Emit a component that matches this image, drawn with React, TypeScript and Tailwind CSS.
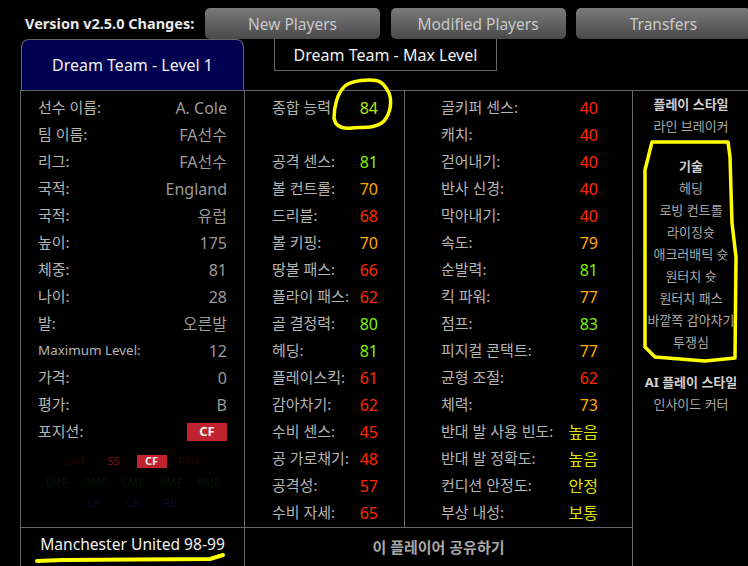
const font = { fontFamily: '"Noto Sans", "Noto Sans CJK KR", sans-serif' };

const info = [
  ['선수 이름:', 'A. Cole'],
  ['팀 이름:', 'FA선수'],
  ['리그:', 'FA선수'],
  ['국적:', 'England'],
  ['국적:', '유럽'],
  ['높이:', '175'],
  ['체중:', '81'],
  ['나이:', '28'],
  ['발:', '오른발'],
  ['Maximum Level:', '12'],
  ['가격:', '0'],
  ['평가:', 'B'],
];

const attack = [
  ['공격 센스:', 81],
  ['볼 컨트롤:', 70],
  ['드리블:', 68],
  ['볼 키핑:', 70],
  ['땅볼 패스:', 66],
  ['플라이 패스:', 62],
  ['골 결정력:', 80],
  ['헤딩:', 81],
  ['플레이스킥:', 61],
  ['감아차기:', 62],
  ['수비 센스:', 45],
  ['공 가로채기:', 48],
  ['공격성:', 57],
  ['수비 자세:', 65],
] as const;

const keeper = [
  ['골키퍼 센스:', 40],
  ['캐치:', 40],
  ['걷어내기:', 40],
  ['반사 신경:', 40],
  ['막아내기:', 40],
  ['속도:', 79],
  ['순발력:', 81],
  ['킥 파워:', 77],
  ['점프:', 83],
  ['피지컬 콘택트:', 77],
  ['균형 조절:', 62],
  ['체력:', 73],
] as const;

const extras = [
  ['반대 발 사용 빈도:', '높음'],
  ['반대 발 정확도:', '높음'],
  ['컨디션 안정도:', '안정'],
  ['부상 내성:', '보통'],
];

const skills = ['헤딩', '로빙 컨트롤', '라이징슛', '애크러배틱 슛', '원터치 슛', '원터치 패스', '바깥쪽 감아차기', '투쟁심'];

const statColor = (n: number) => {
  if (n >= 84) return 'text-[#b8e800]';
  if (n >= 80) return 'text-[#80f000]';
  if (n >= 70) return 'text-[#ffa800]';
  return 'text-[#ff2a00]';
};

const Row = ({ label, children, small }: { label: string; children: React.ReactNode; small?: boolean }) => (
  <div className="flex h-[27px] items-center justify-between whitespace-nowrap">
    <span className={small ? 'text-[13.4px] text-[#b4b4b4]' : 'text-[15px] text-[#b4b4b4]'}>{label}</span>
    {children}
  </div>
);

const Stat = ({ label, value }: { label: string; value: number }) => (
  <Row label={label}>
    <span className={`text-[16px] ${statColor(value)}`}>{value}</span>
  </Row>
);

const Chip = ({ label, className }: { label: string; className: string }) => (
  <span className={`flex h-[13px] w-[30px] items-center justify-center text-[11px] ${className}`}>{label}</span>
);

export default function App() {
  return (
    <div style={font} className="relative flex h-[566px] w-[748px] flex-col overflow-hidden bg-black">
      <div className="flex h-[39px] shrink-0 items-end pl-[25px]">
        <div className="flex h-[31px] w-[180px] shrink-0 items-center text-[14.5px] font-bold whitespace-nowrap text-[#e8e8e8]">Version v2.5.0 Changes:</div>
        <div className="flex shrink-0 gap-[10.5px]">
          {['New Players', 'Modified Players', 'Transfers'].map((b) => (
            <div
              key={b}
              className="flex h-[31px] w-[175px] shrink-0 items-center justify-center rounded-[5px] bg-gradient-to-b from-[#7a7a7a] to-[#4a4a4a] pt-[2px] text-[15.5px] text-[#c8c8c8]"
            >
              {b}
            </div>
          ))}
        </div>
      </div>

      <div className="flex h-[51px] shrink-0 items-start pl-[21px]">
        <div className="flex h-[52px] w-[223px] items-center justify-center rounded-t-[8px] border border-b-0 border-[#666] bg-[#000050] pb-[2px] text-[16px] text-[#f0f0f0]">
          Dream Team - Level 1
        </div>
        <div className="ml-[30px] flex h-[32px] w-[223px] items-center justify-center border border-t-0 border-[#666] text-[16px] text-[#f0f0f0]">
          Dream Team - Max Level
        </div>
      </div>

      <div className="ml-[20px] flex h-[476px] shrink-0 border-t border-l border-[#666]">
        <div className="flex w-[224px] shrink-0 flex-col border-r border-[#666]">
          <div className="flex-1 pt-[3px] pr-[17px] pl-[17px]">
            {info.map(([k, v]) => (
              <Row key={k + v} label={k} small={k === 'Maximum Level:'}>
                <span className="text-[16px] text-[#9a9a9a]">{v}</span>
              </Row>
            ))}
            <Row label="포지션:">
              <span className="flex h-[18px] w-[40px] items-center justify-center bg-[#c0232f] text-[13px] font-bold text-[#f0f0f0]">CF</span>
            </Row>
            <div className="mt-[10px] flex flex-col gap-[8px]">
              <div className="flex justify-center gap-[8px]">
                <Chip label="LWF" className="text-[#220303]" />
                <Chip label="SS" className="text-[#8a1015]" />
                <Chip label="CF" className="bg-[#c0232f] font-bold text-[#f0f0f0]" />
                <Chip label="RWF" className="text-[#220303]" />
              </div>
              <div className="flex justify-center gap-[8px]">
                {['LMF', 'DMF', 'CMF', 'AMF', 'RMF'].map((p) => (
                  <Chip key={p} label={p} className="text-[#081408]" />
                ))}
              </div>
              <div className="flex justify-center gap-[8px]">
                {['LB', 'CB', 'RB'].map((p) => (
                  <Chip key={p} label={p} className="text-[#060a20]" />
                ))}
              </div>
            </div>
          </div>
          <div className="flex h-[39px] shrink-0 items-center justify-center border-t border-[#666] pb-[5px] text-[15.6px] whitespace-nowrap text-[#f0f0f0]">
            Manchester United 98-99
          </div>
        </div>

        <div className="flex w-[387px] shrink-0 flex-col">
          <div className="flex flex-1">
            <div className="w-[160px] shrink-0 border-r border-[#666] pt-[3px] pr-[26px] pl-[27px]">
              <Stat label="종합 능력" value={84} />
              <div className="h-[27px]" />
              {attack.map(([k, v]) => (
                <Stat key={k} label={k} value={v} />
              ))}
            </div>
            <div className="flex-1 pt-[3px] pr-[34px] pl-[36px]">
              {keeper.map(([k, v]) => (
                <Stat key={k} label={k} value={v} />
              ))}
              {extras.map(([k, v]) => (
                <Row key={k} label={k}>
                  <span className="text-[16px] text-[#e0e000]">{v}</span>
                </Row>
              ))}
            </div>
          </div>
          <div className="flex h-[39px] shrink-0 items-center justify-center border-t border-[#666] text-[15px] font-bold text-[#a8a8a8]">
            이 플레이어 공유하기
          </div>
        </div>

        <div className="flex w-[117px] shrink-0 flex-col items-center border-l border-[#666] pt-[3px] text-[13px] whitespace-nowrap text-[#a8a8a8]">
          <div className="flex h-[22px] items-center font-bold text-[#d0d0d0]">플레이 스타일</div>
          <div className="flex h-[22px] items-center">라인 브레이커</div>
          <div className="mt-[18px] flex h-[22px] items-center font-bold text-[#d0d0d0]">기술</div>
          {skills.map((s) => (
            <div key={s} className="flex h-[22px] items-center">{s}</div>
          ))}
          <div className="mt-[18px] flex h-[22px] items-center font-bold text-[#d0d0d0]">AI 플레이 스타일</div>
          <div className="flex h-[22px] items-center">인사이드 커터</div>
        </div>
      </div>

      {/* hand-drawn marks over the screenshot */}
      <svg className="pointer-events-none absolute top-0 left-0" width="748" height="566" fill="none" stroke="#ffff00" strokeLinecap="round" strokeLinejoin="round">
        <path strokeWidth="3.5" d="M378 81C370 79 352 80 345 86C337 93 334 108 334 118C335 126 342 129 352 128C362 127 376 129 384 121C391 113 392 101 389 93C386 87 382 82 378 81" />
        <path strokeWidth="3.5" d="M652 142L728 142L730 157L732 223L736 257L735 358L705 361L655 357L645 347L645 170Z" />
        <path strokeWidth="4" d="M37 561L63 560L210 559L223 555" />
      </svg>
    </div>
  );
}
